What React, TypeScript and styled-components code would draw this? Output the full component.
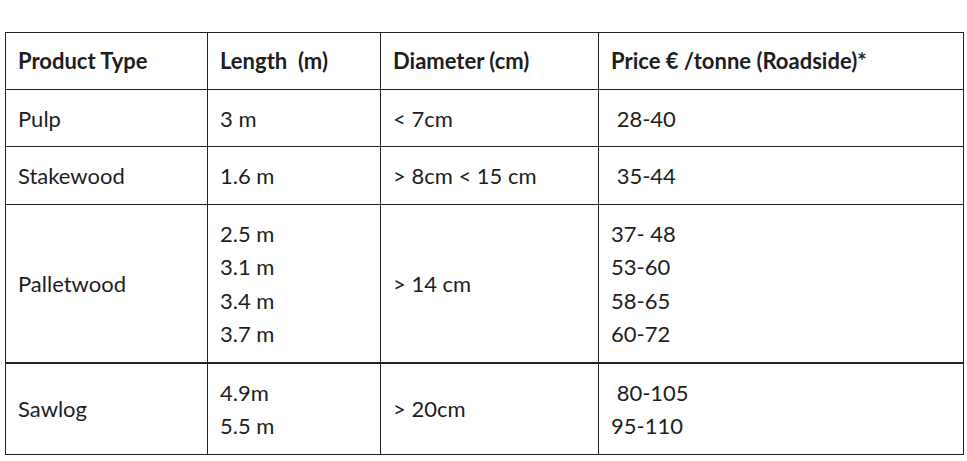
import React from "react";
import styled, { createGlobalStyle } from "styled-components";

const GlobalStyle = createGlobalStyle`
  html, body { margin: 0; padding: 0; background: #ffffff; }
  body { font-family: Lato, "Open Sans", "Liberation Sans", sans-serif; color: #222222; }
`;

const Page = styled.div`
  padding: 32px 4px 0 5px;
`;

const Table = styled.table`
  width: 958px;
  border-collapse: collapse;
  table-layout: fixed;
  font-family: Lato, "Liberation Sans", sans-serif;
  font-size: 22px;
  line-height: 33.5px;
  color: #1e1e1e;
  border: 1px solid #222222;
`;

const Row = styled.tr<{ $thickTop?: boolean }>`
  border-top: ${(p) => (p.$thickTop ? "2px" : "1px")} solid #222222;
`;

const Head = styled.th`
  text-align: left;
  font-weight: 700;
  padding: 11.25px 12px 11.25px;
  border: 1px solid #222222;
  vertical-align: middle;
`;

const Cell = styled.td<{ $thickTop?: boolean }>`
  padding: 11.6px 12px 11.4px;
  border: 1px solid #222222;
  ${(p) => (p.$thickTop ? "border-top: 2px solid #222222;" : "")}
  vertical-align: middle;
  font-weight: 400;
`;

const Line = styled.div``;

type RowData = {
  product: string;
  lengths: string[];
  diameter: string;
  prices: string[];
  thick?: boolean;
};

const rows: RowData[] = [
  { product: "Pulp", lengths: ["3 m"], diameter: "< 7cm", prices: ["\u00a028-40"] },
  { product: "Stakewood", lengths: ["1.6 m"], diameter: "> 8cm < 15 cm", prices: ["\u00a035-44"] },
  {
    product: "Palletwood",
    lengths: ["2.5 m", "3.1 m", "3.4 m", "3.7 m"],
    diameter: "> 14 cm",
    prices: ["37- 48", "53-60", "58-65", "60-72"],
  },
  { product: "Sawlog", lengths: ["4.9m", "5.5 m"], diameter: "> 20cm", prices: ["\u00a080-105", "95-110"], thick: true },
];

export default function App() {
  return (
    <>
      <GlobalStyle />
      <Page>
        <Table>
          <colgroup>
            <col style={{ width: 202 }} />
            <col style={{ width: 173 }} />
            <col style={{ width: 218 }} />
            <col style={{ width: 365 }} />
          </colgroup>
          <thead>
            <Row>
              <Head>Product Type</Head>
              <Head>Length&nbsp; (m)</Head>
              <Head>Diameter (cm)</Head>
              <Head>Price € /tonne (Roadside)*</Head>
            </Row>
          </thead>
          <tbody>
            {rows.map((r) => (
              <Row key={r.product} $thickTop={r.thick}>
                <Cell $thickTop={r.thick}>{r.product}</Cell>
                <Cell $thickTop={r.thick}>
                  {r.lengths.map((l) => (
                    <Line key={l}>{l}</Line>
                  ))}
                </Cell>
                <Cell $thickTop={r.thick}>{r.diameter}</Cell>
                <Cell $thickTop={r.thick}>
                  {r.prices.map((p) => (
                    <Line key={p}>{p}</Line>
                  ))}
                </Cell>
              </Row>
            ))}
          </tbody>
        </Table>
      </Page>
    </>
  );
}
